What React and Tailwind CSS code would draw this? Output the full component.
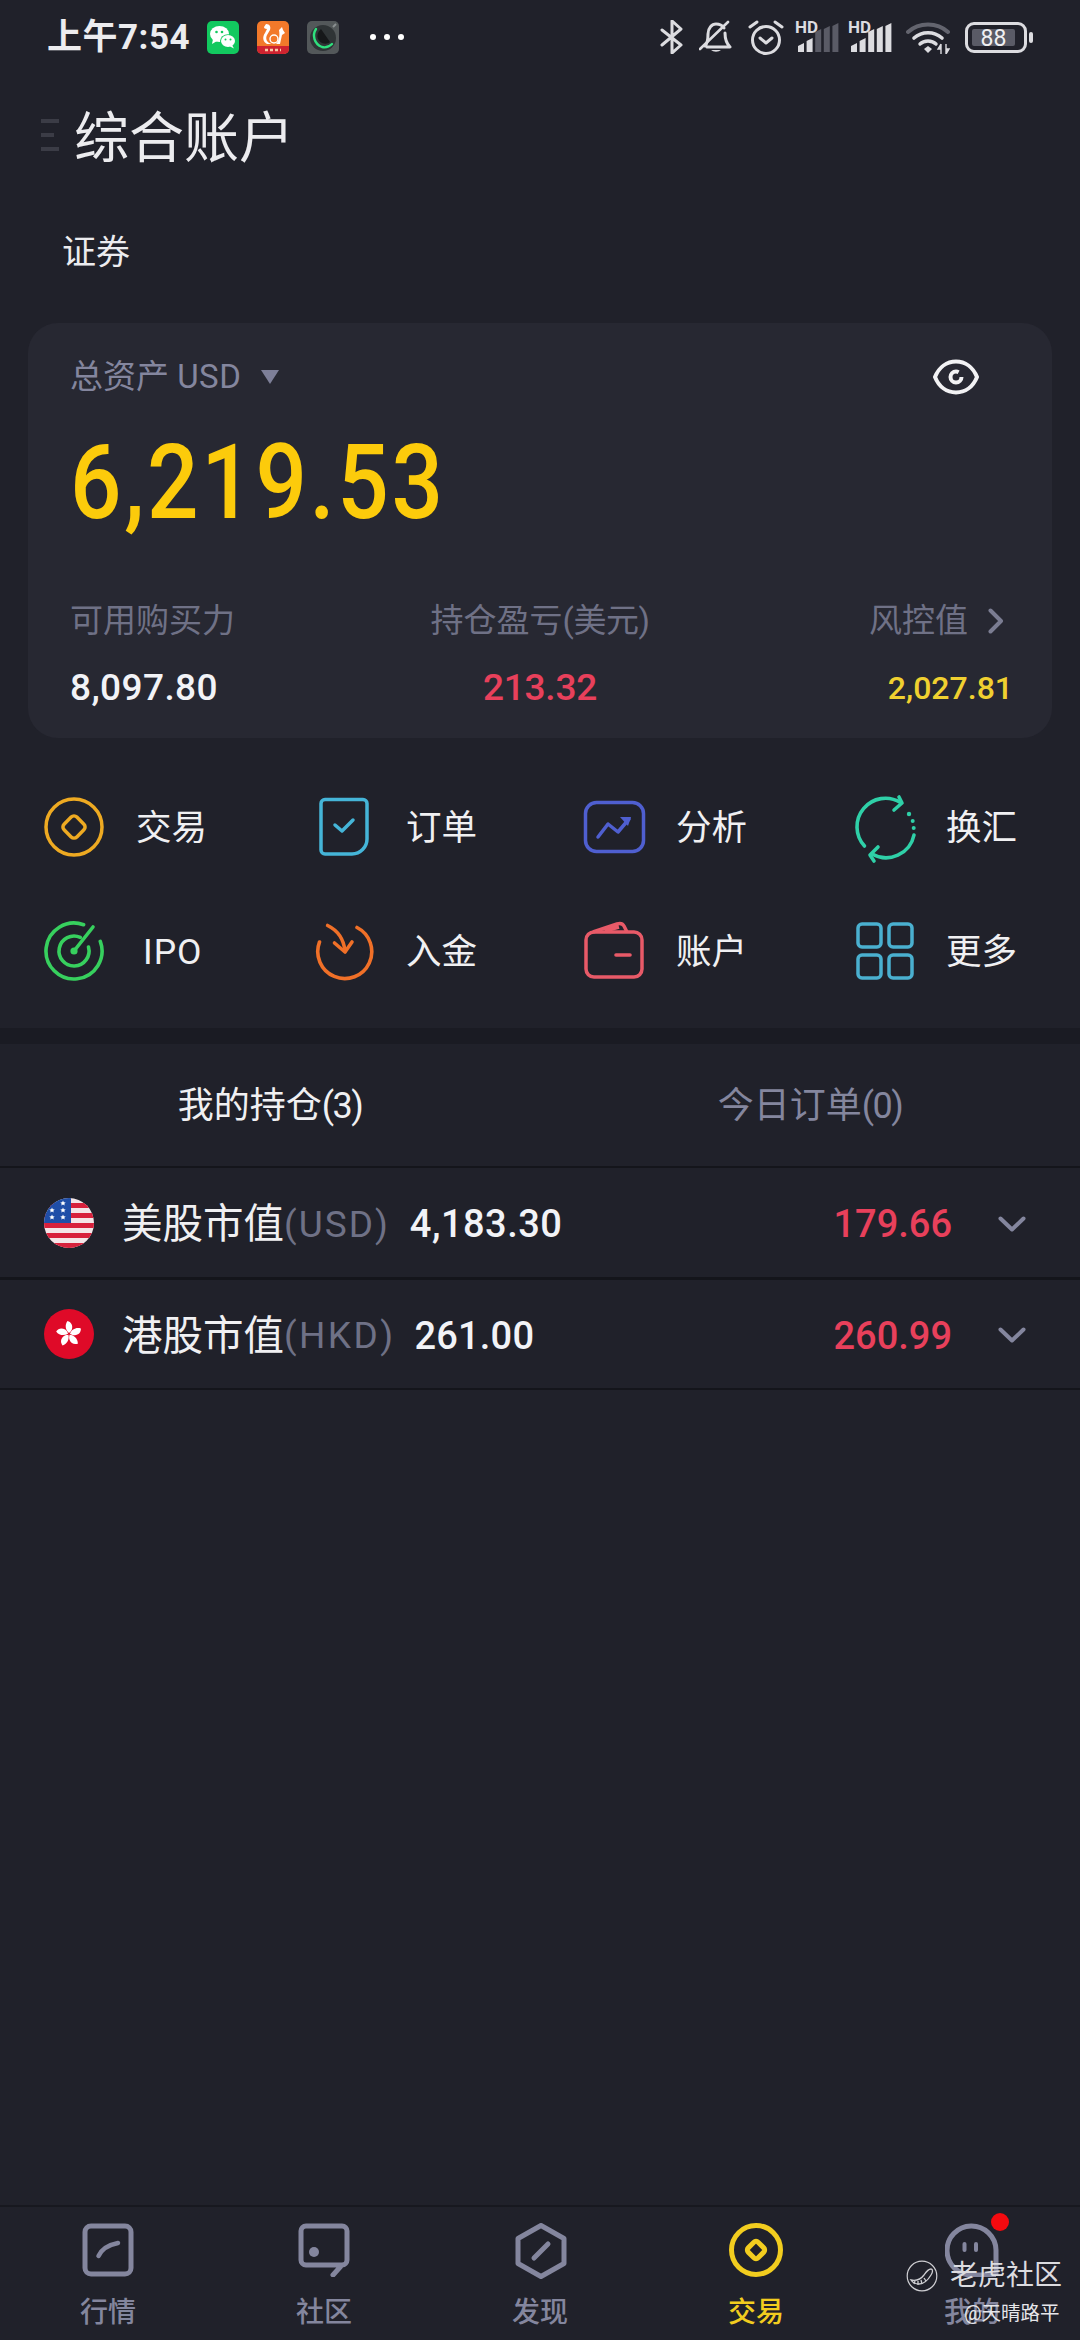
const GRAY = "#84869e";

function WeChat() {
  return (
    <svg width="32" height="33" viewBox="0 0 32 33" className="shrink-0">
      <rect width="32" height="33" rx="5" fill="#12c95f" />
      <ellipse cx="12.5" cy="13" rx="9.5" ry="8" fill="#fff" />
      <path d="M6 18l-1 5 5-3z" fill="#fff" />
      <ellipse cx="21" cy="20" rx="8" ry="6.8" fill="#12c95f" />
      <ellipse cx="21" cy="20" rx="7" ry="6" fill="#fff" />
      <path d="M25 24l2 3.5-4-2z" fill="#fff" />
      <circle cx="9.5" cy="11" r="1.3" fill="#12c95f" />
      <circle cx="15" cy="11" r="1.3" fill="#12c95f" />
      <circle cx="18.5" cy="18.5" r="1" fill="#12c95f" />
      <circle cx="23.5" cy="18.5" r="1" fill="#12c95f" />
    </svg>
  );
}

function UcIcon() {
  return (
    <svg width="32" height="33" viewBox="0 0 32 33" className="shrink-0">
      <rect width="32" height="33" rx="5" fill="#f2792a" />
      <path d="M0 25h32v3a5 5 0 0 1-5 5H5a5 5 0 0 1-5-5z" fill="#cf2330" />
      <path d="M9 3c4 0 5 3 4 6l-3 5c-2 4 0 8 5 9h-5c-4-2-5-7-2-11l2-4c-2 0-3-1-3-2z" fill="#fff" />
      <circle cx="17" cy="18" r="4" fill="none" stroke="#fff" strokeWidth="1.4" />
      <path d="M22 9l3-3 1 3 2 3-3 2-2 9h-4c3-3 4-8 3-14z" fill="#fff" />
      <path d="M8 29h16" stroke="#f6c9a8" strokeWidth="2.5" strokeDasharray="3 2" />
    </svg>
  );
}

function RadarApp() {
  return (
    <svg width="32" height="33" viewBox="0 0 32 33" className="shrink-0">
      <rect width="32" height="33" rx="5" fill="#53585a" />
      <circle cx="16" cy="17" r="13" fill="#2f3436" />
      <path d="M9 8c-4 6-2 15 6 18 4 1 7 0 10-3" fill="none" stroke="#2fe07d" strokeWidth="2.4" strokeLinecap="round" />
      <path d="M14 8c-5 4-5 11 1 14 3 1 6 1 8-1" fill="#16181a" />
      <path d="M26 6l3-3" stroke="#8a8f90" strokeWidth="2" />
    </svg>
  );
}

function Bluetooth() {
  return (
    <svg width="23" height="34" viewBox="0 0 23 34" className="shrink-0">
      <path d="M2 10L21 25 12 33V1l9 8L2 25" fill="none" stroke="#dcdce0" strokeWidth="3" strokeLinejoin="round" strokeLinecap="round" />
    </svg>
  );
}

function BellOff() {
  return (
    <svg width="33" height="34" viewBox="0 0 33 34" className="shrink-0">
      <path d="M6 26c3-3 3-7 3-12 0-6 4-10 8-10 3 0 6 1 8 4M26 13c0 6 1 10 5 14H8" fill="none" stroke="#dcdce0" strokeWidth="3" strokeLinecap="round" strokeLinejoin="round" />
      <path d="M12 30a6 4 0 0 0 10 0z" fill="#dcdce0" />
      <path d="M1 29L29 2" stroke="#dcdce0" strokeWidth="2.6" strokeLinecap="round" />
    </svg>
  );
}

function Alarm() {
  return (
    <svg width="36" height="35" viewBox="0 0 36 35" className="shrink-0">
      <circle cx="18" cy="20" r="13.5" fill="none" stroke="#dcdce0" strokeWidth="3" />
      <path d="M2 7l7-5M34 7l-7-5" stroke="#dcdce0" strokeWidth="3" strokeLinecap="round" />
      <path d="M12 18l6 5 6-5" fill="none" stroke="#dcdce0" strokeWidth="3" strokeLinecap="round" strokeLinejoin="round" />
    </svg>
  );
}

function Signal({ dim }) {
  const tops = [22, 17, 8, 5, 2];
  return (
    <svg width="42" height="31" viewBox="0 0 42 31" className="shrink-0 overflow-visible">
      <text x="-1" y="11.5" fontSize="17" fontWeight="700" fill="#dcdce0" fontFamily="Roboto, sans-serif">HD</text>
      {tops.map((t, i) => {
        const x = 2 + i * 8.6;
        const show = dim ? i < 2 : true;
        return (
          <path
            key={i}
            d={`M${x} 31V${t + 3}L${x + 6} ${t}V31z`}
            fill={show ? "#dcdce0" : "#5a5b66"}
          />
        );
      })}
    </svg>
  );
}

function Wifi() {
  return (
    <svg width="44" height="33" viewBox="0 0 44 33" className="shrink-0">
      <path d="M2 11c11-10 29-10 40 0" fill="none" stroke="#63646e" strokeWidth="4" strokeLinecap="round" />
      <path d="M8 17c8-7 20-7 28 0" fill="none" stroke="#dcdce0" strokeWidth="3.6" strokeLinecap="round" />
      <path d="M14 23c4-4 12-4 16 0" fill="none" stroke="#dcdce0" strokeWidth="3.4" strokeLinecap="round" />
      <path d="M18 28l4-3 4 3-4 4z" fill="#dcdce0" />
      <path d="M35 23v10M35 23l-3 5h3M40 33V23M40 33l3-5h-3" fill="#dcdce0" stroke="#dcdce0" strokeWidth="1.4" />
    </svg>
  );
}

function Battery() {
  return (
    <div className="relative h-[31px] w-[68px] shrink-0">
      <div className="absolute left-0 top-0 h-[31px] w-[62px] rounded-[9px] border-[3.5px] border-[#dcdce0]" />
      <div className="absolute left-[7px] top-[7px] h-[17px] w-[43px] rounded-[2px] bg-[#5a5b66]" />
      <div className="absolute left-[64px] top-[10px] h-[11px] w-[4px] rounded-[2px] bg-[#dcdce0]" />
      <div className="absolute left-[7px] top-[2px] flex h-[31px] w-[43px] items-center justify-center text-[23px] font-normal text-[#f0f0f2]">88</div>
    </div>
  );
}

function TradeIcon() {
  return (
    <svg width="60" height="60" viewBox="0 0 60 60">
      <circle cx="30" cy="30" r="28" fill="none" stroke="#eeaa22" strokeWidth="3.5" />
      <rect x="21" y="21" width="18" height="18" rx="4" fill="none" stroke="#eeaa22" strokeWidth="3.5" transform="rotate(45 30 30)" />
    </svg>
  );
}

function OrderIcon() {
  return (
    <svg width="60" height="60" viewBox="0 0 60 60">
      <path d="M11 2.5H49a4 4 0 0 1 4 4V42a15 15 0 0 1-15 15H11a4 4 0 0 1-4-4V6.5a4 4 0 0 1 4-4z" fill="none" stroke="#45b5d8" strokeWidth="3.5" />
      <path d="M21 28l7 6 11-11" fill="none" stroke="#45b5d8" strokeWidth="3.5" strokeLinecap="round" strokeLinejoin="round" />
    </svg>
  );
}

function AnalysisIcon() {
  return (
    <svg width="60" height="60" viewBox="0 0 60 60" className="overflow-visible">
      <rect x="1.5" y="5.5" width="58" height="49" rx="11" fill="none" stroke="#4f5fd0" strokeWidth="3.5" />
      <path d="M14 40L24 27l10 8 11-13" fill="none" stroke="#4f5fd0" strokeWidth="3.5" strokeLinecap="round" strokeLinejoin="round" />
      <path d="M36 20h11l-3 9z" fill="#4f5fd0" />
    </svg>
  );
}

function ExchangeIcon() {
  const c = "#2fd0a8";
  return (
    <svg width="60" height="60" viewBox="-3 0 60 60" className="overflow-visible">
      <path d="M43.5 5.5A28.5 28.5 0 0 0 7.5 49" fill="none" stroke={c} strokeWidth="3.6" strokeLinecap="round" />
      <path d="M15 57A28.5 28.5 0 0 0 57 38" fill="none" stroke={c} strokeWidth="3.6" strokeLinecap="round" />
      <path d="M37 13l8-7-3-6" fill="none" stroke={c} strokeWidth="3.6" strokeLinecap="round" strokeLinejoin="round" />
      <path d="M21 50l-8 8 4 6" fill="none" stroke={c} strokeWidth="3.6" strokeLinecap="round" strokeLinejoin="round" />
      <circle cx="52" cy="17" r="2.2" fill={c} />
      <circle cx="55.7" cy="24" r="2" fill={c} />
      <circle cx="56.7" cy="31" r="2" fill={c} />
    </svg>
  );
}

function IpoIcon() {
  const c = "#37d05e";
  return (
    <svg width="60" height="60" viewBox="0 0 60 60">
      <path d="M39.6 3.7A28 28 0 1 0 56.3 20.4" fill="none" stroke={c} strokeWidth="3.6" strokeLinecap="round" />
      <path d="M36.3 16.4A15 15 0 1 0 44.5 26.1" fill="none" stroke={c} strokeWidth="3.6" strokeLinecap="round" />
      <path d="M30 30L49 6" stroke={c} strokeWidth="3.6" strokeLinecap="round" />
      <circle cx="30" cy="30" r="3.6" fill={c} />
    </svg>
  );
}

function DepositIcon() {
  const c = "#f07028";
  return (
    <svg width="60" height="60" viewBox="-1 0 60 60">
      <path d="M4.5 21A27 27 0 1 0 42 6.5" fill="none" stroke={c} strokeWidth="3.6" strokeLinecap="round" />
      <path d="M12.6 4.5Q28 12 30 30" fill="none" stroke={c} strokeWidth="3.6" strokeLinecap="round" />
      <path d="M19.5 22l10.5 9 7-10" fill="none" stroke={c} strokeWidth="3.6" strokeLinecap="round" strokeLinejoin="round" />
    </svg>
  );
}

function WalletIcon() {
  const c = "#e85a68";
  return (
    <svg width="60" height="60" viewBox="0 0 60 60">
      <rect x="2" y="11" width="56" height="45" rx="8" fill="none" stroke={c} strokeWidth="3.5" />
      <path d="M9 11L33 3q5-1.500 7 2l3 6M21 10l14-4" fill="none" stroke={c} strokeWidth="3.5" strokeLinejoin="round" />
      <path d="M32 34h14" stroke={c} strokeWidth="3.6" strokeLinecap="round" />
    </svg>
  );
}

function MoreIcon() {
  const c = "#4ab0d0";
  return (
    <svg width="60" height="60" viewBox="-1 0 60 60">
      {[[3, 3], [34, 3], [3, 34], [34, 34]].map(([x, y]) => (
        <rect key={x + "-" + y} x={x} y={y} width="23" height="23" rx="4" fill="none" stroke={c} strokeWidth="3.5" />
      ))}
    </svg>
  );
}

function UsFlag() {
  return (
    <svg width="50" height="50" viewBox="0 0 50 50" className="shrink-0">
      <defs>
        <clipPath id="us-clip"><circle cx="25" cy="25" r="25" /></clipPath>
      </defs>
      <g clipPath="url(#us-clip)">
        <rect width="50" height="50" fill="#f4e6e8" />
        {[5, 15, 25, 35, 45].map((y) => (
          <rect key={y} x="0" y={y} width="50" height="5" fill="#d8213c" />
        ))}
        <rect width="27" height="25" fill="#1f4ea8" />
        {[[8, 12], [19, 5], [19, 12], [8, 19], [19, 19]].map(([x, y]) => (
          <path key={x + "-" + y} d={`M${x} ${y - 2.5}l.8 1.700 1.900.2-1.400 1.300.4 1.900-1.700-1-1.700 1 .4-1.900-1.400-1.300 1.900-.2z`} fill="#fff" />
        ))}
      </g>
    </svg>
  );
}

function HkFlag() {
  return (
    <svg width="50" height="50" viewBox="0 0 50 50" className="shrink-0">
      <circle cx="25" cy="25" r="25" fill="#df0a28" />
      {[0, 72, 144, 216, 288].map((a) => (
        <path key={a} d="M25 24C21.500 21 20.500 16 23.500 12c3.500 1 5.500 4 4.500 8-.5 2-2 3-3 4z" fill="#fff" transform={`rotate(${a} 25 25)`} />
      ))}
    </svg>
  );
}

function Chevron() {
  return (
    <svg width="28" height="16" viewBox="0 0 28 16" className="shrink-0">
      <path d="M2.500 2.500L14 13.500 25.500 2.500" fill="none" stroke={GRAY} strokeWidth="4" strokeLinecap="round" strokeLinejoin="round" />
    </svg>
  );
}

function NavMarket() {
  return (
    <svg width="54" height="54" viewBox="0 0 54 54">
      <rect x="4" y="3" width="46" height="48" rx="6" fill="none" stroke={GRAY} strokeWidth="5" />
      <path d="M17.500 33Q22 23 37 20" fill="none" stroke={GRAY} strokeWidth="4.500" strokeLinecap="round" />
    </svg>
  );
}

function NavCommunity() {
  return (
    <svg width="54" height="54" viewBox="0 0 54 54">
      <path d="M36 52l9-10H9a5 5 0 0 1-5-5V8a5 5 0 0 1 5-5h36a5 5 0 0 1 5 5v29a5 5 0 0 1-5 5" fill="none" stroke={GRAY} strokeWidth="5" strokeLinecap="round" />
      <circle cx="17" cy="29" r="5" fill={GRAY} />
    </svg>
  );
}

function NavDiscover() {
  return (
    <svg width="54" height="56" viewBox="-1 0 54 56">
      <path d="M27 2.500L50 15.500V40.500L27 53.500 4 40.500V15.500z" fill="none" stroke={GRAY} strokeWidth="5" strokeLinejoin="round" />
      <path d="M20 35L34 21" stroke={GRAY} strokeWidth="5" strokeLinecap="round" />
    </svg>
  );
}

function NavTrade() {
  const c = "#f2cd1f";
  return (
    <svg width="54" height="54" viewBox="0 0 54 54">
      <circle cx="27" cy="27" r="24.500" fill="none" stroke={c} strokeWidth="5" />
      <rect x="20" y="20" width="14" height="14" rx="3" fill="none" stroke={c} strokeWidth="5" transform="rotate(45 27 27)" />
    </svg>
  );
}

function NavMe() {
  return (
    <svg width="54" height="54" viewBox="0 0 54 54">
      <path d="M51 52V27A24.500 24.500 0 1 0 27 52H51" fill="none" stroke={GRAY} strokeWidth="5" />
      <rect x="17.500" y="19" width="4" height="10" rx="2" fill={GRAY} />
      <rect x="29" y="19" width="4" height="10" rx="2" fill={GRAY} />
    </svg>
  );
}

function TigerLogo() {
  return (
    <svg width="32" height="32" viewBox="0 0 32 32" className="shrink-0">
      <circle cx="16" cy="16" r="14.800" fill="none" stroke="#cfcfd3" strokeWidth="1.200" />
      <path d="M5 20c5 1 10-1 13-5 2-3 4-6 7-6 2 0 2 3 0 6-3 5-7 9-12 9-3 0-6-1-8-4z" fill="none" stroke="#cfcfd3" strokeWidth="1.300" />
      <path d="M9 21l-1 3M12 21l0 4M15 20l1 4M18 18l2 3" stroke="#cfcfd3" strokeWidth="1.300" />
    </svg>
  );
}

const actions = [
  [<TradeIcon />, "交易", "ml-[32px]"],
  [<OrderIcon />, "订单", "ml-[32px]"],
  [<AnalysisIcon />, "分析", "ml-[32px]"],
  [<ExchangeIcon />, "换汇", "ml-[32px]"],
  [<IpoIcon />, "IPO", "ml-[39px] tracking-[1px]"],
  [<DepositIcon />, "入金", "ml-[32px]"],
  [<WalletIcon />, "账户", "ml-[32px]"],
  [<MoreIcon />, "更多", "ml-[32px]"],
];

const navs = [
  [<NavMarket />, "行情", "text-[#84869e]"],
  [<NavCommunity />, "社区", "text-[#84869e]"],
  [<NavDiscover />, "发现", "text-[#84869e]"],
  [<NavTrade />, "交易", "text-[#f2cd1f]"],
  [<NavMe />, "我的", "text-[#84869e]"],
];

export default function App() {
  return (
    <div className="relative flex h-[2340px] w-[1080px] flex-col overflow-hidden bg-[#20212a] font-['Roboto','Noto_Sans_CJK_SC',sans-serif] text-white">
      {/* status bar */}
      <div className="flex h-[74px] shrink-0 items-center pl-[47px] pr-[47px]">
        <div className="w-[142px] whitespace-nowrap text-[35px] font-bold leading-none tracking-[0.5px] text-[#ececef]">上午7:54</div>
        <div className="ml-[18px] flex items-center gap-[18px]">
          <WeChat />
          <UcIcon />
          <RadarApp />
        </div>
        <div className="ml-[31px] flex items-center gap-[8px]">
          <span className="h-[6px] w-[6px] rounded-full bg-white" />
          <span className="h-[6px] w-[6px] rounded-full bg-white" />
          <span className="h-[6px] w-[6px] rounded-full bg-white" />
        </div>
        <div className="ml-auto flex items-center">
          <Bluetooth />
          <div className="ml-[16px]"><BellOff /></div>
          <div className="ml-[16px]"><Alarm /></div>
          <div className="ml-[12px] mt-[-2px]"><Signal dim /></div>
          <div className="ml-[11px] mt-[-2px]"><Signal /></div>
          <div className="ml-[15px]"><Wifi /></div>
          <div className="ml-[15px]"><Battery /></div>
        </div>
      </div>

      {/* title */}
      <div className="flex h-[122px] shrink-0 items-center pl-[41px]">
        <div className="flex w-[18px] flex-col gap-[10px]">
          <span className="h-[4px] w-[18px] bg-[#3b3c46]" />
          <span className="h-[4px] w-[13px] bg-[#3b3c46]" />
          <span className="h-[4px] w-[18px] bg-[#3b3c46]" />
        </div>
        <div className="ml-[15px] mt-[7px] text-[55px] leading-none text-[#ececef]">综合账户</div>
      </div>

      {/* segment */}
      <div className="flex h-[110px] shrink-0 items-center pl-[62px] pt-[2px] text-[34px] text-[#ececef]">证券</div>

      {/* asset card */}
      <div className="mx-[28px] mt-[17px] flex h-[415px] shrink-0 flex-col rounded-[30px] bg-[#272832] px-[42px] pt-[28px]">
        <div className="flex h-[52px] items-center">
          <span className="text-[33px] text-[#84869e]">总资产 <span className="tracking-[0.5px]">USD</span></span>
          <span className="ml-[20px] h-0 w-0 border-x-[9px] border-t-[14px] border-x-transparent border-t-[#7d7f98]" />
          <svg width="46" height="36" viewBox="0 0 46 36" className="ml-auto mr-[31px]">
            <path d="M2 18C6 8 14 2.500 23 2.500S40 8 44 18c-4 10-12 15.500-21 15.500S6 28 2 18z" fill="none" stroke="#f2f2f4" strokeWidth="4" strokeLinejoin="round" />
            <circle cx="23" cy="18" r="5.500" fill="none" stroke="#f2f2f4" strokeWidth="4" strokeDasharray="28 7" />
          </svg>
        </div>
        <div className="mt-[28px] flex h-[100px] origin-left scale-x-[0.88] items-center pt-[2px] text-[103px] font-medium leading-none tracking-[3px] text-[#fccb0b]">6,219.53</div>
        <div className="mt-[65px] grid h-[50px] grid-cols-3 items-center text-[33px] text-[#6f7186]">
          <div>可用购买力</div>
          <div className="whitespace-nowrap text-center">持仓盈亏<span className="tracking-[-0.5px]">(美元)</span></div>
          <div className="mr-[6px] flex items-center justify-end">
            <span>风控值</span>
            <svg width="16" height="26" viewBox="0 0 16 26" className="ml-[20px]">
              <path d="M2.500 2.500L13 13 2.500 23.500" fill="none" stroke="#7b7d92" strokeWidth="4" strokeLinecap="round" strokeLinejoin="round" />
            </svg>
          </div>
        </div>
        <div className="mt-[14px] grid h-[50px] grid-cols-3 items-center">
          <div className="text-[37px] font-medium tracking-[0.4px] text-[#f2f3f7]">8,097.80</div>
          <div className="text-center text-[37px] font-medium tracking-[-0.2px] text-[#e8405b]">213.32</div>
          <div className="mr-[-3px] text-right text-[32px] font-medium text-[#f0d030]">2,027.81</div>
        </div>
      </div>

      {/* actions */}
      <div className="grid shrink-0 grid-cols-4 pb-[15px] pt-[27px]">
        {actions.map(([icon, label, cls]) => (
          <div key={label} className="flex h-[124px] items-center pl-[44px]">
            <div className="h-[60px] w-[60px] shrink-0">{icon}</div>
            <span className={`mt-[4px] whitespace-nowrap text-[35.5px] text-[#f0f0f2] ${cls}`}>{label}</span>
          </div>
        ))}
      </div>

      <div className="h-[16px] shrink-0 bg-[#1a1b23]" />

      {/* tabs */}
      <div className="grid h-[122px] shrink-0 grid-cols-2 items-center pt-[2px] text-center text-[36px]">
        <div className="text-[#f0f0f2]">我的持仓<span className="tracking-[-1.5px]">(3)</span></div>
        <div className="text-[#84869e]">今日订单<span className="tracking-[-1.5px]">(0)</span></div>
      </div>
      <div className="h-[2px] shrink-0 bg-[#14151b]" />

      {/* holdings */}
      <div className="flex h-[109px] shrink-0 items-center pl-[44px] pr-[52px]">
        <UsFlag />
        <span className="ml-[28px] mt-[4px] whitespace-nowrap text-[40.5px] text-[#f0f0f2]">美股市值</span>
        <span className="mt-[4px] text-[37px] tracking-[2px] text-[#6f7186]">(USD)</span>
        <span className="ml-[20px] mt-[4px] text-[38px] font-medium tracking-[0.5px] text-[#f2f3f7]">4,183.30</span>
        <span className="ml-auto mt-[4px] text-[38px] font-medium text-[#e8405b]">179.66</span>
        <div className="ml-[46px] mr-[2px] mt-[2px]"><Chevron /></div>
      </div>
      <div className="h-[3px] shrink-0 bg-[#14151b]" />
      <div className="flex h-[108px] shrink-0 items-center pl-[44px] pr-[52px]">
        <HkFlag />
        <span className="ml-[28px] mt-[4px] whitespace-nowrap text-[40.5px] text-[#f0f0f2]">港股市值</span>
        <span className="mt-[4px] text-[37px] tracking-[2.4px] text-[#6f7186]">(HKD)</span>
        <span className="ml-[19px] mt-[4px] text-[38px] font-medium tracking-[0.2px] text-[#f2f3f7]">261.00</span>
        <span className="ml-auto mt-[4px] text-[38px] font-medium text-[#e8405b]">260.99</span>
        <div className="ml-[46px] mr-[2px] mt-[2px]"><Chevron /></div>
      </div>
      <div className="h-[2px] shrink-0 bg-[#14151b]" />

      {/* bottom nav */}
      <div className="mt-auto grid h-[135px] shrink-0 grid-cols-5 border-t-2 border-[#17181f]">
        {navs.map(([icon, label, cls]) => (
          <div key={label + cls} className="flex flex-col items-center pt-[16px]">
            <div className="h-[54px] w-[54px]">{icon}</div>
            <span className={`mt-[18px] text-[28px] font-medium leading-[36px] ${cls}`}>{label}</span>
          </div>
        ))}
      </div>

      {/* notification dot over nav */}
      <div className="absolute left-[991px] top-[2213px] h-[18px] w-[18px] rounded-full bg-[#f40a0f]" />

      {/* watermark */}
      <div className="absolute left-[906px] top-[2260px] flex items-center">
        <TigerLogo />
        <span className="ml-[12px] whitespace-nowrap text-[28px] leading-[32px] text-[#dcdce0]">老虎社区</span>
      </div>
      <div className="absolute left-[964px] top-[2302px] whitespace-nowrap text-[19.5px] leading-[24px] text-[#e6e6ea]">@天晴路平</div>
    </div>
  );
}
